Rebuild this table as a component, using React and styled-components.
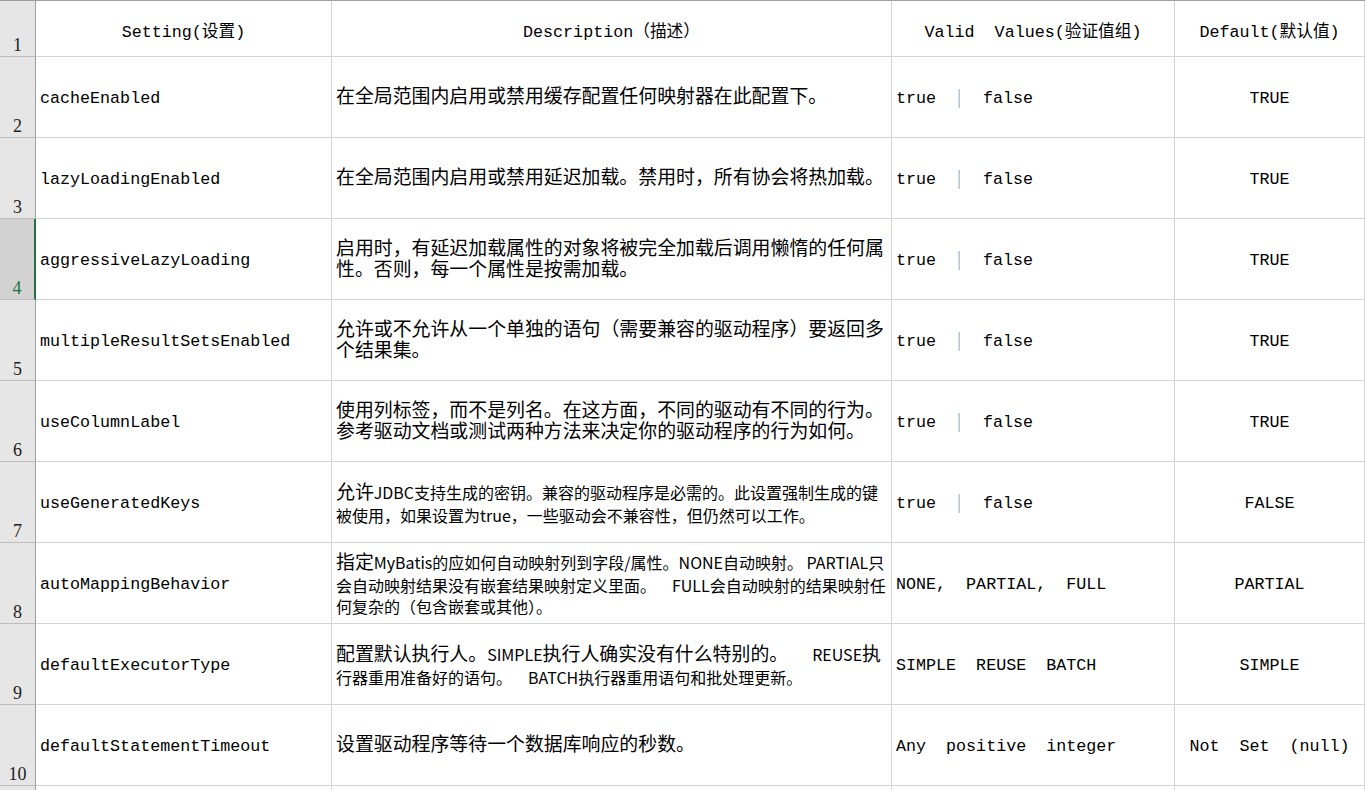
import React from "react";
import styled, { createGlobalStyle } from "styled-components";

const GlobalStyle = createGlobalStyle`
  html, body {
    margin: 0;
    padding: 0;
    background: #fff;
    overflow: hidden;
    height: 790px;
  }
`;

const COLS = "36px 296px 560px 283px 190px";
const MONO = `"Liberation Mono", "Noto Sans CJK SC", monospace`;
const SANS = `"Noto Sans CJK SC", sans-serif`;

// a line is a string (row's default font) or a list of parts; parts starting with "^" use the large font
const rows = [
  {
    setting: "cacheEnabled",
    desc: ["在全局范围内启用或禁用缓存配置任何映射器在此配置下。"],
    valid: "bool",
    def: "TRUE",
  },
  {
    setting: "lazyLoadingEnabled",
    desc: ["在全局范围内启用或禁用延迟加载。禁用时，所有协会将热加载。"],
    valid: "bool",
    def: "TRUE",
  },
  {
    setting: "aggressiveLazyLoading",
    desc: ["启用时，有延迟加载属性的对象将被完全加载后调用懒惰的任何属", "性。否则，每一个属性是按需加载。"],
    valid: "bool",
    def: "TRUE",
    selected: true,
  },
  {
    setting: "multipleResultSetsEnabled",
    desc: ["允许或不允许从一个单独的语句（需要兼容的驱动程序）要返回多", "个结果集。"],
    valid: "bool",
    def: "TRUE",
  },
  {
    setting: "useColumnLabel",
    desc: ["使用列标签，而不是列名。在这方面，不同的驱动有不同的行为。", "参考驱动文档或测试两种方法来决定你的驱动程序的行为如何。"],
    valid: "bool",
    def: "TRUE",
  },
  {
    setting: "useGeneratedKeys",
    desc: [
      ["^允许", "JDBC支持生成的密钥。兼容的驱动程序是必需的。此设置强制生成的键"],
      "被使用，如果设置为true，一些驱动会不兼容性，但仍然可以工作。",
    ],
    sans: true,
    valid: "bool",
    def: "FALSE",
  },
  {
    setting: "autoMappingBehavior",
    desc: [
      ["^指定", "MyBatis的应如何自动映射列到字段/属性。NONE自动映射。 PARTIAL只"],
      "会自动映射结果没有嵌套结果映射定义里面。\u2002\u2002FULL会自动映射的结果映射任",
      "何复杂的（包含嵌套或其他）。",
    ],
    sans: true,
    valid: "NONE,  PARTIAL,  FULL",
    def: "PARTIAL",
  },
  {
    setting: "defaultExecutorType",
    desc: [
      ["^配置默认执行人。", "SIMPLE", "^执行人确实没有什么特别的。", "\u2002\u2002\u2002REUSE", "^执"],
      "行器重用准备好的语句。\u2002\u2002BATCH执行器重用语句和批处理更新。",
    ],
    sans: true,
    valid: "SIMPLE  REUSE  BATCH",
    def: "SIMPLE",
  },
  {
    setting: "defaultStatementTimeout",
    desc: ["设置驱动程序等待一个数据库响应的秒数。"],
    valid: "Any  positive  integer",
    def: "Not  Set  (null)",
  },
];

const Sheet = styled.div`
  width: 1365px;
  border-top: 1px solid #9f9f9f;
  box-sizing: border-box;
`;

const Row = styled.div`
  display: grid;
  grid-template-columns: ${COLS};
  height: ${(p) => p.$h}px;
`;

const RowHead = styled.div`
  display: flex;
  align-items: flex-end;
  justify-content: center;
  padding-bottom: 1px;
  box-sizing: border-box;
  background: ${(p) => (p.$selected ? "#d2d2d2" : "#e6e6e6")};
  border-bottom: 1px solid #bdbdbd;
  border-right: ${(p) => (p.$selected ? "2px solid #217346" : "1px solid #9f9f9f")};
  color: ${(p) => (p.$selected ? "#217346" : "#222")};
  font-family: "Liberation Serif", serif;
  font-size: 18px;
  line-height: 20px;
`;

const Cell = styled.div`
  display: flex;
  align-items: center;
  justify-content: ${(p) => (p.$center ? "center" : "flex-start")};
  box-sizing: border-box;
  padding: 3px 4px 0;
  border-right: 1px solid #d4d4d4;
  border-bottom: 1px solid #d4d4d4;
  overflow: hidden;
  white-space: pre;
  color: #000;
  font-family: ${MONO};
  font-size: 16.7px;
`;

const Desc = styled.div`
  display: flex;
  flex-direction: column;
  font-family: ${(p) => (p.$sans ? SANS : MONO)};
  font-size: ${(p) => (p.$sans ? "16px" : "18.9px")};
  line-height: 21px;
  white-space: pre;
`;

const Big = styled.span`
  display: inline-block;
  font-family: ${MONO};
  font-size: 18.9px;
  line-height: 21px;
  height: 21px;
  overflow: visible;
`;

const Bar = styled.span`
  display: inline-block;
  width: 2px;
  height: 19px;
  margin: 0 23px 0 22px;
  background: linear-gradient(90deg, #f5d6c2 40%, #95d2f2 40%);
  vertical-align: middle;
`;

const Valid = ({ value }) =>
  value === "bool" ? (
    <span>
      true
      <Bar />
      false
    </span>
  ) : (
    <span>{value}</span>
  );

const Line = ({ line }) =>
  typeof line === "string" ? (
    <span>{line}</span>
  ) : (
    <span>
      {line.map((part, i) =>
        part.startsWith("^") ? <Big key={i}>{part.slice(1)}</Big> : <span key={i}>{part}</span>
      )}
    </span>
  );

export default function App() {
  return (
    <>
      <GlobalStyle />
      <Sheet>
        <Row $h={56}>
          <RowHead>1</RowHead>
          <Cell $center>Setting(设置)</Cell>
          <Cell $center>Description（描述）</Cell>
          <Cell $center>Valid  Values(验证值组)</Cell>
          <Cell $center>Default(默认值)</Cell>
        </Row>
        {rows.map((r, i) => (
          <Row $h={81} key={r.setting}>
            <RowHead $selected={r.selected}>{i + 2}</RowHead>
            <Cell>{r.setting}</Cell>
            <Cell>
              <Desc $sans={r.sans}>
                {r.desc.map((line, j) => (
                  <Line key={j} line={line} />
                ))}
              </Desc>
            </Cell>
            <Cell>
              <Valid value={r.valid} />
            </Cell>
            <Cell $center>{r.def}</Cell>
          </Row>
        ))}
        <Row $h={5}>
          <RowHead />
          <Cell />
          <Cell />
          <Cell />
          <Cell />
        </Row>
      </Sheet>
    </>
  );
}
